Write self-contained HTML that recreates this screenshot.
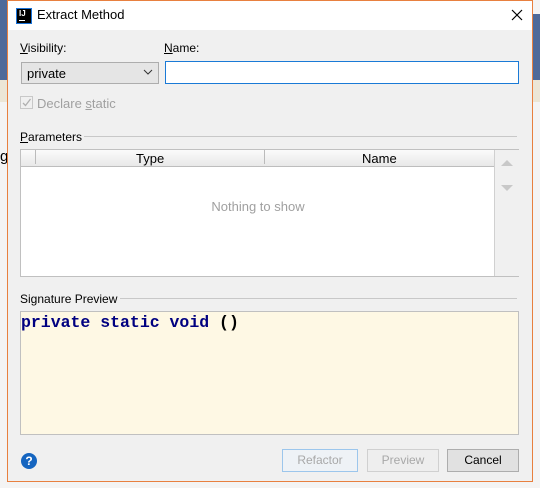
<!DOCTYPE html>
<html><head><style>
body{margin:0;width:540px;height:488px;position:relative;overflow:hidden;background:#f4f4f4;font-family:"Liberation Sans",sans-serif;font-size:12px;color:#000}
.a{position:absolute}
.dlg{left:7px;top:0;width:526px;height:482px;border:1px solid #e8803f;background:#f0f0f0;box-sizing:border-box}
.btn{position:absolute;height:23px;box-sizing:border-box;text-align:center;line-height:21px;font-size:12px}
u{text-decoration:underline}
</style></head><body>
<div class="a" style="left:0;top:0;width:7px;height:80px;background:#4e6a9a"></div>
<div class="a" style="left:0;top:80px;width:7px;height:22px;background:#ece6d6"></div>
<div class="a" style="left:533px;top:14px;width:7px;height:66px;background:#4e6a9a"></div>
<div class="a" style="left:533px;top:80px;width:7px;height:22px;background:#ece6d6"></div>
<div class="a" style="left:0;top:148px;font-size:15px">g</div>
<div class="a dlg"></div>
<div class="a" style="left:8px;top:1px;width:524px;height:29px;background:#fff"></div>
<div class="a" style="left:16px;top:8px;width:16px;height:16px;background:#1a73d9"></div>
<div class="a" style="left:17px;top:9px;width:14px;height:14px;background:#000"></div>
<div class="a" style="left:19px;top:9px;color:#fff;font-size:8px;font-weight:bold">IJ</div>
<div class="a" style="left:19px;top:20px;width:6px;height:1px;background:#fff"></div>
<div class="a" style="left:37px;top:7px;font-size:13px">Extract Method</div>
<svg class="a" style="left:511px;top:9px" width="12" height="12"><path d="M1 1L11 11M11 1L1 11" stroke="#000" stroke-width="1.2"/></svg>

<div class="a" style="left:20px;top:41px"><u>V</u>isibility:</div>
<div class="a" style="left:164px;top:41px"><u>N</u>ame:</div>
<div class="a" style="left:21px;top:62px;width:138px;height:22px;box-sizing:border-box;border:1px solid #adadad;background:#e5e5e5"></div>
<div class="a" style="left:27px;top:66px;font-size:13px">private</div>
<svg class="a" style="left:143px;top:69px" width="10" height="6"><path d="M1 1L5 5L9 1" stroke="#333" fill="none"/></svg>
<div class="a" style="left:165px;top:61px;width:354px;height:23px;box-sizing:border-box;border:1px solid #1a7ad6;background:#fff"></div>
<div class="a" style="left:20px;top:96px;width:13px;height:13px;box-sizing:border-box;border:1px solid #c8c8c8;background:#f0f0f0"></div>
<svg class="a" style="left:21px;top:97px" width="11" height="11"><path d="M2 6L4.5 8.5L9.5 2" stroke="#b0b0b0" fill="none" stroke-width="1.3"/></svg>
<div class="a" style="left:37px;top:96px;color:#a0a0a0;font-size:13px">Declare <u>s</u>tatic</div>

<div class="a" style="left:20px;top:130px"><u>P</u>arameters</div>
<div class="a" style="left:84px;top:136px;width:433px;height:1px;background:#c8c8c8"></div>
<div class="a" style="left:20px;top:149px;width:499px;height:128px;box-sizing:border-box;border:1px solid #c0c0c0;background:#fff"></div>
<div class="a" style="left:21px;top:150px;width:473px;height:16px;background:linear-gradient(#fbfbfb,#e8e8e8);border-bottom:1px solid #bdbdbd"></div>
<div class="a" style="left:35px;top:150px;width:1px;height:14px;background:#bbb"></div>
<div class="a" style="left:264px;top:150px;width:1px;height:14px;background:#bbb"></div>
<div class="a" style="left:136px;top:151px;font-size:13px">Type</div>
<div class="a" style="left:362px;top:151px;font-size:13px">Name</div>
<div class="a" style="left:494px;top:150px;width:24px;height:126px;background:#f0f0f0;border-left:1px solid #d0d0d0"></div>
<svg class="a" style="left:500px;top:159px" width="14" height="40"><path d="M1 7L7 1L13 7Z" fill="#c8c8c8"/><path d="M1 26L13 26L7 32Z" fill="#c8c8c8"/></svg>
<div class="a" style="left:0;width:516px;top:199px;text-align:center;color:#a0a0a0;font-size:13px">Nothing to show</div>

<div class="a" style="left:20px;top:292px">Signature Preview</div>
<div class="a" style="left:120px;top:298px;width:397px;height:1px;background:#c8c8c8"></div>
<div class="a" style="left:20px;top:311px;width:499px;height:124px;box-sizing:border-box;border:1px solid #c0c0c0;background:#fef8e4"></div>
<div class="a" style="left:21px;top:313px;font-family:'Liberation Mono',monospace;font-weight:bold;font-size:16.5px;color:#000080;white-space:pre">private static void <span style="color:#000">()</span></div>

<div class="a" style="left:21px;top:453px;width:16px;height:16px;border-radius:50%;background:#1565c0;color:#fff;font-weight:bold;font-size:12px;text-align:center;line-height:16px">?</div>
<div class="btn" style="left:282px;top:449px;width:76px;border:1px solid #9cc6ec;background:#eef2f6;color:#a8a8a8">Refactor</div>
<div class="btn" style="left:367px;top:449px;width:72px;border:1px solid #d0d0d0;background:#eeeeee;color:#a8a8a8">Preview</div>
<div class="btn" style="left:447px;top:449px;width:72px;border:1px solid #adadad;background:#e1e1e1">Cancel</div>
</body></html>
